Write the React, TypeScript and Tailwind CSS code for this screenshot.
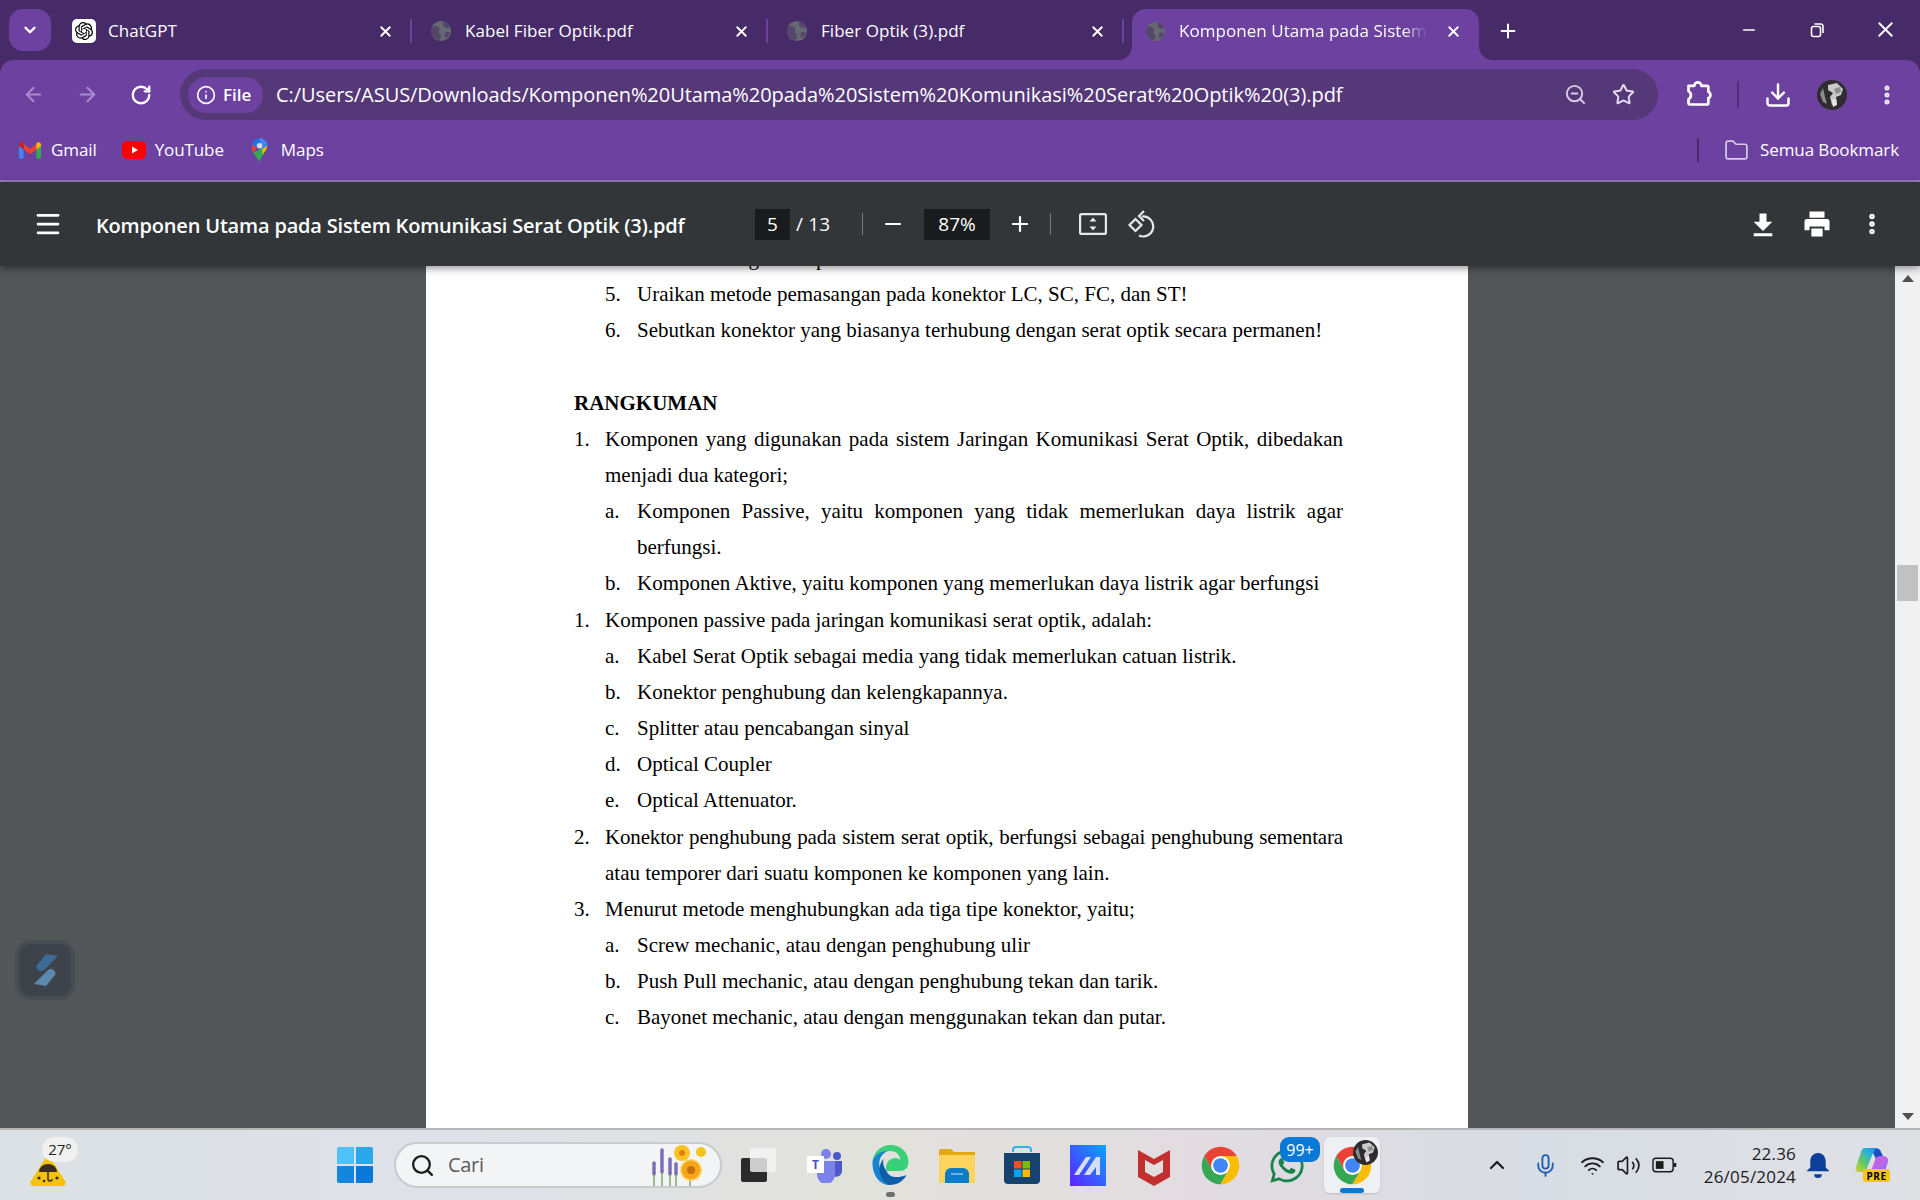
import React from "react";
import { ArrowLeft, ArrowRight, RotateCw, Info, Star, Download, EllipsisVertical, ChevronDown, ChevronUp, X, Plus, Minus, Menu, Folder, Search, ZoomOut, Mic, Wifi, Volume2 } from "lucide-react";
import { SiOpenai } from "react-icons/si";
import { FaWhatsapp } from "react-icons/fa";

const ui = "font-['Open_Sans','Liberation_Sans',sans-serif]";

function Globe({ className = "" }: { className?: string }) {
  return (
    <svg viewBox="0 0 24 24" className={className}>
      <circle cx="12" cy="12" r="11" fill="#666a70" />
      <path d="M4 6c3 1 5 1 6 3s-1 3 0 5 2 2 2 4-2 4-2 4C5 21 1 17 1 12c0-2 1-4 3-6zM14 2c3 0 6 2 8 6-2 1-4 1-6 0s-2-4-2-6zM17 13c2 0 4 0 5 1-1 3-3 5-5 6-1-2-2-6 0-7z" fill="#47296a" opacity=".55" />
    </svg>
  );
}

function ChromeLogo({ className = "" }: { className?: string }) {
  return (
    <svg viewBox="0 0 48 48" className={className}>
      <path d="M43 13A22 22 0 0 0 5 13L14.500 29.500 24 13Z" fill="#ea4335" />
      <path d="M5 13A22 22 0 0 0 24 46L33.500 29.500 14.500 29.500Z" fill="#34a853" />
      <path d="M24 46A22 22 0 0 0 43 13L24 13 33.500 29.500Z" fill="#fbbc04" />
      <circle cx="24" cy="24" r="11" fill="#fff" />
      <circle cx="24" cy="24" r="8.600" fill="#4285f4" />
    </svg>
  );
}

function Avatar({ className = "" }: { className?: string }) {
  return (
    <svg viewBox="0 0 30 30" className={className}>
      <circle cx="15" cy="15" r="15" fill="#2e2c2e" />
      <path d="M11 5l9-2 6 6-2 6-5 2 1 7-5 1-2-8 3-4-5-3z" fill="#c9c9c9" />
      <path d="M3 14l3-6 2 9 2 7-4-2zM17 9l6-2 1 5-5 2z" fill="#8d8d8d" />
      <path d="M15 20l4-1 1 6-4 2z" fill="#e6e6e6" />
    </svg>
  );
}

function Tab({ w, title, icon, pl, gap }: { w: string; title: string; icon: React.ReactNode; pl: string; gap: string }) {
  return (
    <div className={`flex h-[51px] shrink-0 items-center pb-[7px] ${w} ${pl}`}>
      {icon}
      <span className={`${gap} flex-1 text-[17px] tracking-[0.05px] text-white`}>{title}</span>
      <X size={17} strokeWidth={2.6} className="mr-[16px] text-white" />
      <div className="h-[24px] w-[2px] bg-[#6c41a0]" />
    </div>
  );
}

function GmailIcon() {
  return (
    <svg viewBox="0 0 24 18" className="h-[17px] w-[22px]">
      <path d="M0 3v13a2 2 0 0 0 2 2h3V8z" fill="#4285f4" />
      <path d="M24 3v13a2 2 0 0 1-2 2h-3V8z" fill="#34a853" />
      <path d="M5 8l7 5 7-5V2l-7 5-7-5z" fill="#ea4335" />
      <path d="M0 3c0-3 3-4 5-2v7L0 4z" fill="#c5221f" />
      <path d="M24 3c0-3-3-4-5-2v7l5-4z" fill="#fbbc04" />
    </svg>
  );
}

function MapsIcon() {
  return (
    <svg viewBox="0 0 18 26" className="h-[24px] w-[17px]">
      <path d="M9 0a8.500 8.500 0 0 1 8.500 8.500L9 13z" fill="#4285f4" />
      <path d="M2.500 3L9 0v6L5 10 1 7z" fill="#1a73e8" />
      <path d="M1 7l5 4-4 5C1 13 .5 10 1 7z" fill="#ea4335" />
      <path d="M2 16l15.500-7.500C17 14 12 18 9 26c-2-4-5-7-7-10z" fill="#34a853" />
      <path d="M12 12l5.500-3.500C17 12 14 16 12 18z" fill="#fbbc04" />
      <circle cx="9" cy="8.500" r="3" fill="#fff" opacity=".75" />
    </svg>
  );
}

type Row = { m?: string; t: string; l?: number; j?: boolean; b?: boolean; tight?: boolean };
const rows: Row[] = [
  { m: "4.", t: "Sebutkan fungsi dari pemutus konektor!", l: 1 },
  { m: "5.", t: "Uraikan metode pemasangan pada konektor LC, SC, FC, dan ST!", l: 1 },
  { m: "6.", t: "Sebutkan konektor yang biasanya terhubung dengan serat optik secara permanen!", l: 1 },
  { t: "" },
  { t: "RANGKUMAN", b: true },
  { m: "1.", t: "Komponen yang digunakan pada sistem Jaringan Komunikasi Serat Optik, dibedakan", j: true },
  { t: "menjadi dua kategori;", l: 2 },
  { m: "a.", t: "Komponen Passive, yaitu komponen yang tidak memerlukan daya listrik agar", l: 1, j: true },
  { t: "berfungsi.", l: 3 },
  { m: "b.", t: "Komponen Aktive, yaitu komponen yang memerlukan daya listrik agar berfungsi", l: 1 },
  { m: "1.", t: "Komponen passive pada jaringan komunikasi serat optik, adalah:" },
  { m: "a.", t: "Kabel Serat Optik sebagai media yang tidak memerlukan catuan listrik.", l: 1 },
  { m: "b.", t: "Konektor penghubung dan kelengkapannya.", l: 1 },
  { m: "c.", t: "Splitter atau pencabangan sinyal", l: 1 },
  { m: "d.", t: "Optical Coupler", l: 1 },
  { m: "e.", t: "Optical Attenuator.", l: 1 },
  { m: "2.", t: "Konektor penghubung pada sistem serat optik, berfungsi sebagai penghubung sementara", j: true, tight: true },
  { t: "atau temporer dari suatu komponen ke komponen yang lain.", l: 2 },
  { m: "3.", t: "Menurut metode menghubungkan ada tiga tipe konektor, yaitu;" },
  { m: "a.", t: "Screw mechanic, atau dengan penghubung ulir", l: 1 },
  { m: "b.", t: "Push Pull mechanic, atau dengan penghubung tekan dan tarik.", l: 1 },
  { m: "c.", t: "Bayonet mechanic, atau dengan menggunakan tekan dan putar.", l: 1 },
];

function DocRow({ r }: { r: Row }) {
  const indent = r.l === 1 || r.l === 2 ? "pl-[31px]" : r.l === 3 ? "pl-[63px]" : "";
  const mw = r.l === 1 ? "w-[32px]" : "w-[31px]";
  return (
    <div className={`flex h-[36.18px] items-center text-[21px] text-black ${indent}`}>
      {r.m && <span className={`${mw} shrink-0`}>{r.m}</span>}
      <span className={`flex-1 ${r.b ? "font-bold" : ""} ${r.j ? "text-justify [text-align-last:justify]" : ""} ${r.tight ? "whitespace-nowrap tracking-[-0.16px] [text-wrap:nowrap]" : ""}`}>{r.t}</span>
    </div>
  );
}

function Slot({ x, children }: { x: string; children: React.ReactNode }) {
  return <div className={`flex shrink-0 items-center justify-center ${x}`}>{children}</div>;
}

export default function App() {
  return (
    <div className={`flex h-[1200px] w-[1920px] flex-col overflow-hidden ${ui}`}>
      {/* tab strip */}
      <div className="bg-[#462b68]">
        <div className="flex h-[60px] items-end">
          <div className="mb-[9px] ml-[9px] flex h-[42px] w-[42px] items-center justify-center rounded-[14px] bg-[#6c41a0]">
            <ChevronDown size={18} strokeWidth={3.2} className="text-white" />
          </div>
          <Tab w="w-[361px]" pl="pl-[21px]" gap="ml-[12px]" title="ChatGPT" icon={<div className="flex h-[24px] w-[24px] items-center justify-center rounded-[5px] bg-white"><SiOpenai size={18} className="text-black" /></div>} />
          <Tab w="w-[356px]" pl="pl-[18px]" gap="ml-[13px]" title="Kabel Fiber Optik.pdf" icon={<Globe className="h-[22px] w-[22px]" />} />
          <Tab w="w-[356px]" pl="pl-[18px]" gap="ml-[13px]" title="Fiber Optik (3).pdf" icon={<Globe className="h-[22px] w-[22px]" />} />
          <div className="relative ml-[8px] flex h-[51px] w-[347px] items-center rounded-t-[14px] bg-[#6c41a0] pb-[7px] pl-[13px]">
            <svg viewBox="0 0 14 14" className="absolute bottom-0 left-[-14px] h-[14px] w-[14px]"><path d="M14 0v14H0C8 14 14 8 14 0z" fill="#6c41a0" /></svg>
            <svg viewBox="0 0 14 14" className="absolute bottom-0 right-[-14px] h-[14px] w-[14px]"><path d="M0 0v14h14C6 14 0 8 0 0z" fill="#6c41a0" /></svg>
            <Globe className="h-[21px] w-[21px]" />
            <span className="ml-[13px] w-[248px] overflow-hidden whitespace-nowrap text-[17px] tracking-[0.05px] text-white [mask-image:linear-gradient(to_right,#000_90%,transparent)]">Komponen Utama pada Sistem</span>
            <X size={17} strokeWidth={2.6} className="ml-[18px] text-white" />
          </div>
          <Plus size={22} strokeWidth={2.2} className="mb-[18px] ml-[18px] text-white" />
          <div className="flex-1" />
          <div className="mb-[18px] flex items-center">
            <Slot x="w-[68px]"><Minus size={18} strokeWidth={2.2} className="text-white" /></Slot>
            <Slot x="w-[68px]"><svg viewBox="0 0 16 16" className="h-[16px] w-[16px]" fill="none" stroke="#fff" strokeWidth="1.600"><rect x="2.500" y="4.500" width="9" height="10" rx="2" /><path d="M5.500 2h6a2.500 2.500 0 0 1 2.500 2.500V11" /></svg></Slot>
            <Slot x="w-[68px] mr-[1px]"><X size={25} strokeWidth={1.8} className="text-white" /></Slot>
          </div>
        </div>

        {/* address bar */}
        <div className="rounded-t-[14px] bg-[#6c41a0]">
          <div className="flex h-[60px] items-end">
            <Slot x="ml-[6px] w-[54px] h-[51px]"><ArrowLeft size={23} strokeWidth={2.1} className="text-[#a98ccb]" /></Slot>
            <Slot x="w-[54px] h-[51px]"><ArrowRight size={23} strokeWidth={2.1} className="text-[#a98ccb]" /></Slot>
            <Slot x="w-[54px] h-[51px]"><RotateCw size={22} strokeWidth={2.5} className="text-white" /></Slot>
            <div className="ml-[12px] flex h-[51px] w-[1478px] items-center rounded-full bg-[#553878]">
              <div className="ml-[8px] flex h-[36px] w-[75px] items-center rounded-full bg-[#6c41a0] pl-[8px]">
                <Info size={20} strokeWidth={2} className="text-white" />
                <span className="ml-[7px] text-[17px] font-semibold leading-none text-white">File</span>
              </div>
              <span className="ml-[13px] flex-1 whitespace-nowrap text-[20px] tracking-[-0.05px] text-white">C:/Users/ASUS/Downloads/Komponen%20Utama%20pada%20Sistem%20Komunikasi%20Serat%20Optik%20(3).pdf</span>
              <ZoomOut size={23} strokeWidth={2} className="mr-[25px] text-[#d9cde8]" />
              <Star size={23} strokeWidth={2.1} className="mr-[23px] text-[#e4daf0]" />
            </div>
            <svg viewBox="0 0 24 24" className="mb-[12px] ml-[27px] h-[28px] w-[28px]" fill="none" stroke="#fff" strokeWidth="2.300" strokeLinejoin="round"><path d="M3 5h5a3 3 0 0 1 6 0h5a1 1 0 0 1 1 1v4a3 3 0 0 1 0 5.500V20a1 1 0 0 1-1 1H4a1 1 0 0 1-1-1v-3.500a4 4 0 0 0 0-7z" /></svg>
            <div className="mb-[12px] ml-[24px] h-[27px] w-[2px] bg-[#4f2f78]" />
            <Download size={28} strokeWidth={2.1} className="mb-[11px] ml-[25px] text-white" />
            <Avatar className="mb-[10px] ml-[25px] h-[30px] w-[30px]" />
            <EllipsisVertical size={24} strokeWidth={3} className="mb-[13px] ml-[28px] text-[#f2edf8]" />
          </div>

          {/* bookmarks */}
          <div className="flex h-[60px] items-center text-[17px] tracking-[-0.1px] text-white">
            <div className="ml-[19px] flex items-center"><GmailIcon /><span className="ml-[10px]">Gmail</span></div>
            <div className="ml-[25px] flex items-center">
              <svg viewBox="0 0 24 24" className="h-[24px] w-[24px]"><rect x="0" y="3" width="24" height="18" rx="5" fill="#f00" /><path d="M10 8.500l6 3.500-6 3.500z" fill="#fff" /></svg>
              <span className="ml-[9px]">YouTube</span>
            </div>
            <div className="ml-[27px] flex items-center"><MapsIcon /><span className="ml-[13px]">Maps</span></div>
            <div className="flex-1" />
            <div className="h-[24px] w-[2px] bg-[#4a2b70]" />
            <Folder size={25} strokeWidth={1.6} className="ml-[25px] text-[#d8cde6]" />
            <span className="ml-[11px] mr-[21px]">Semua Bookmark</span>
          </div>
        </div>
      </div>
      <div className="h-[2px] bg-[#9a80bb]" />

      {/* pdf toolbar */}
      <div className="relative z-10 flex h-[84px] shrink-0 items-center bg-[#323639] text-white shadow-[0_2px_8px_rgba(0,0,0,0.45)]">
        <Menu size={30} strokeWidth={2.2} className="ml-[33px]" />
        <span className="ml-[33px] w-[659px] whitespace-nowrap pt-[3px] text-[20px] font-semibold tracking-[-0.18px]">Komponen Utama pada Sistem Komunikasi Serat Optik (3).pdf</span>
        <div className="flex h-[31px] w-[35px] items-center justify-center bg-[#191b1c] text-[19px]">5</div>
        <span className="ml-[6px] w-[66px] text-[19px] tracking-[0.2px]">/ 13</span>
        <div className="h-[22px] w-[1px] bg-[#75797c]" />
        <Minus size={24} strokeWidth={2.2} className="ml-[18px]" />
        <div className="ml-[19px] flex h-[31px] w-[66px] items-center justify-center bg-[#191b1c] text-[19px]">87%</div>
        <Plus size={24} strokeWidth={2.2} className="ml-[18px]" />
        <div className="ml-[18px] h-[22px] w-[1px] bg-[#75797c]" />
        <svg viewBox="0 0 28 22" className="ml-[28px] h-[22px] w-[28px]" fill="none" stroke="#e8e8e8" strokeWidth="2.200"><rect x="1.100" y="1.100" width="25.800" height="19.800" rx="1.500" /><path d="M14 4.500l-3.500 4h7zM14 17.500l-3.500-4h7z" fill="#e8e8e8" stroke="none" /></svg>
        <svg viewBox="0 0 28 28" className="ml-[20px] h-[28px] w-[28px]" fill="none" stroke="#e8e8e8" strokeWidth="2.200"><path d="M15 6.500a10 10 0 1 1-3 19" /><path d="M17 1l-5 5 5 5" /><path d="M8.500 9l6 6-6 6-6-6z" /></svg>
        <div className="flex-1" />
        <svg viewBox="0 0 24 24" className="h-[28px] w-[28px]" fill="#fff"><path d="M9 3h6v7h5l-8 8-8-8h5zM4 20h16v2.500H4z" /></svg>
        <svg viewBox="0 0 24 24" className="ml-[25px] h-[30px] w-[30px]" fill="#fff"><path d="M6 2h12v5H6zM4 8h16a2 2 0 0 1 2 2v7h-4v-3H6v3H2v-7a2 2 0 0 1 2-2zM7.500 15.500h9V22h-9z" /></svg>
        <EllipsisVertical size={26} strokeWidth={3} className="ml-[27px] mr-[35px]" />
      </div>

      {/* viewer */}
      <div className="relative flex min-h-0 flex-1 bg-[#525659]">
        <div className="flex-1 overflow-hidden pl-[426px]">
          <div className="h-full w-[1042px] overflow-hidden bg-white pl-[148px] pr-[125px] font-['Liberation_Serif',serif]">
            <div className="-mt-[25.5px]">
              {rows.map((r, i) => (
                <DocRow key={i} r={r} />
              ))}
            </div>
          </div>
        </div>
        <div className="flex w-[25px] shrink-0 flex-col items-center bg-[#f1f1f1]">
          <svg viewBox="0 0 12 7" className="mt-[9px] h-[7px] w-[12px]"><path d="M6 0l6 7H0z" fill="#505050" /></svg>
          <div className="mt-[283px] h-[36px] w-[21px] bg-[#c1c1c1]" />
          <div className="flex-1" />
          <svg viewBox="0 0 12 7" className="mb-[8px] h-[7px] w-[12px]"><path d="M6 7l6-7H0z" fill="#505050" /></svg>
        </div>
        <div className="absolute left-[15px] top-[674px] flex h-[60px] w-[60px] items-center justify-center rounded-[16px] border-[4px] border-[#484c53] bg-[#3e424b]">
          <svg viewBox="0 0 26 34" className="h-[34px] w-[26px]">
            <path d="M14 1l12 2L12 17c-3 3-9-1-7-5z" fill="#3d6b96" />
            <path d="M14 33L2 31l14-14c3-3 9 1 7 5z" fill="#5b88ac" />
          </svg>
        </div>
      </div>

      {/* taskbar */}
      <div className="relative flex h-[72px] shrink-0 items-center border-t-[2px] border-[#b4b5b6] bg-[linear-gradient(90deg,#dbe1e4_0%,#dfe1e8_25%,#e2e2dc_45%,#e2dce0_62%,#d8dce4_80%,#dee0e4_100%)]">
        <div className="relative ml-[30px] h-[60px] w-[48px]">
          <svg viewBox="0 0 36 30" className="absolute left-0 top-[21px] h-[30px] w-[36px]">
            <path d="M15.500 2a3 3 0 0 1 5 0L35 25a3 3 0 0 1-2.500 5H3.500A3 3 0 0 1 1 25z" fill="#f4c20d" />
            <path d="M9 16a9 8 0 0 1 18 0z" fill="#3a2c20" />
            <path d="M18 15v8a2 2 0 0 0 4 0" fill="none" stroke="#3a2c20" strokeWidth="1.500" />
            <circle cx="9" cy="22" r="1.600" fill="#3a2c20" /><circle cx="27" cy="22" r="1.600" fill="#3a2c20" /><circle cx="14" cy="25" r="1.300" fill="#3a2c20" />
          </svg>
          <div className="absolute left-[12px] top-[2px] flex h-[25px] w-[36px] items-center justify-center rounded-full bg-[#f1f1f1] text-[15px] text-[#222]">27°</div>
        </div>
        <div className="ml-[259px] grid h-[36px] w-[36px] grid-cols-2 gap-[1.5px]">
          <div className="rounded-tl-[2px] bg-[#4fc3f7]" />
          <div className="rounded-tr-[2px] bg-[#29a8ec]" />
          <div className="rounded-bl-[2px] bg-[#1487dd]" />
          <div className="rounded-br-[2px] bg-[#0a78d6]" />
        </div>
        <div className="ml-[21px] flex h-[46px] w-[328px] items-center rounded-full border-[2px] border-[#c8cacd] bg-[#f3f4f6]">
          <Search size={25} strokeWidth={2.2} className="ml-[14px] text-[#1c1c1c]" />
          <span className="ml-[13px] flex-1 text-[20px] tracking-[-0.3px] text-[#5c5c5c]">Cari</span>
          <svg viewBox="0 0 60 42" className="mr-[12px] h-[42px] w-[60px]">
            <g stroke="#7e6bb8" strokeWidth="3.500" strokeLinecap="round" strokeDasharray="3 1"><path d="M6 30V18M14 28V6M22 30V14M28 30V20" /></g>
            <g stroke="#6f9c58" strokeWidth="1.300"><path d="M6 42V30M14 42V28M22 42V30M28 42V30M42 42V26" /></g>
            <circle cx="34" cy="9" r="8" fill="#f8c323" /><circle cx="34" cy="9" r="3" fill="#d9820f" />
            <circle cx="53" cy="8" r="5" fill="#f2c41f" />
            <circle cx="43" cy="26" r="10" fill="#f5a51a" strokeDasharray="2 1" stroke="#fbd04a" strokeWidth="2" /><circle cx="43" cy="26" r="4" fill="#c4700f" />
          </svg>
        </div>
        <div className="relative ml-[19px] h-[34px] w-[35px]">
          <div className="absolute bottom-0 left-0 h-[24px] w-[26px] rounded-[2px] bg-[#2b2b2b]" />
          <div className="absolute right-0 top-0 h-[24px] w-[26px] rounded-[2px] bg-[#f5f5f5]/80" />
        </div>
        <svg viewBox="0 0 36 36" className="ml-[31px] h-[36px] w-[36px]">
          <circle cx="19" cy="7" r="5" fill="#7b83eb" /><circle cx="30" cy="9" r="4" fill="#5059c9" />
          <path d="M24 14h11v10a6 6 0 0 1-11 3z" fill="#5059c9" /><path d="M10 14h18v14a9 9 0 0 1-18 0z" fill="#7b83eb" />
          <rect x="0" y="9" width="17" height="17" fill="#fff" />
          <text x="8.500" y="22" textAnchor="middle" fontSize="12" fontWeight="700" fill="#4b53bc">T</text>
        </svg>
        <div className="relative ml-[29px] h-[40px] w-[37px]">
          <svg viewBox="0 0 36 40" className="h-[40px] w-[37px]">
            <path d="M18 0c10 0 18 7 18 17 0 6-4 9-9 9H14c-2-8 3-13 9-13 2 0 4 1 5 2-1-6-5-9-10-9C8 6 1 12 0 18 0 8 8 0 18 0z" fill="#3ad07a" />
            <path d="M0 18c0-6 7-12 15-12-6 3-9 8-8 15 1 8 6 14 12 16-1 0-1 3-2 3C7 40 0 30 0 18z" fill="#1583d0" />
            <path d="M14 26c2 6 10 8 20 4-3 6-9 10-17 10-5-2-10-8-10-16 0-4 2-8 4-10-1 4 0 8 3 12z" fill="#0d5ea9" />
          </svg>
          <div className="absolute bottom-[-12px] left-[14px] h-[5px] w-[9px] rounded-full bg-[#6f6f6f]" />
        </div>
        <svg viewBox="0 0 36 36" className="ml-[30px] h-[36px] w-[36px]">
          <path d="M0 4a2 2 0 0 1 2-2h10l3 3h21v28H0z" fill="#e4a70f" />
          <path d="M0 8h36v28H0z" fill="#fcd35c" />
          <path d="M6 36v-9a6 6 0 0 1 6-6h12a6 6 0 0 1 6 6v9z" fill="#0c7cc8" />
          <rect x="12" y="26" width="12" height="2" fill="#ffffff" opacity=".4" />
        </svg>
        <svg viewBox="0 0 36 38" className="ml-[29px] h-[38px] w-[36px]">
          <path d="M9 6V4a3 3 0 0 1 3-3h12a3 3 0 0 1 3 3v2" fill="none" stroke="#2fb4e6" strokeWidth="2" />
          <path d="M0 7h36v27a4 4 0 0 1-4 4H4a4 4 0 0 1-4-4z" fill="#16426e" />
          <rect x="10" y="15" width="7.500" height="7.500" fill="#f25022" /><rect x="18.500" y="15" width="7.500" height="7.500" fill="#7fba00" />
          <rect x="10" y="23.500" width="7.500" height="7.500" fill="#00a4ef" /><rect x="18.500" y="23.500" width="7.500" height="7.500" fill="#ffb900" />
        </svg>
        <svg viewBox="0 0 36 41" className="ml-[30px] h-[41px] w-[36px]">
          <defs><linearGradient id="ma" x1="1" y1="0" x2="0" y2="1"><stop offset="0" stopColor="#0aa5ff" /><stop offset="1" stopColor="#6020ff" /></linearGradient></defs>
          <rect width="36" height="41" fill="url(#ma)" />
          <path d="M4 30L16 12h5L9 30zM14 30l12-18h4v18h-4v-8l-6 8z" fill="#d7dcf8" />
        </svg>
        <svg viewBox="0 0 32 41" className="ml-[32px] h-[41px] w-[32px]">
          <path d="M0 5l16 9 16-9v27l-16 9-16-9z" fill="#c22f2f" />
          <path d="M7 15l9 5 9-5v12l-9 5-9-5z" fill="#e1dede" />
        </svg>
        <ChromeLogo className="ml-[30px] h-[41px] w-[41px]" />
        <div className="relative ml-[27px] h-[36px] w-[36px]">
          <FaWhatsapp size={38} className="text-[#17854b]" />
          <div className="absolute left-[12px] top-[-10px] flex h-[25px] w-[40px] items-center justify-center rounded-[9px] bg-[#0a78d6] text-[16px] text-white">99+</div>
        </div>
        <div className="relative ml-[20px] flex h-[56px] w-[56px] items-center justify-center rounded-[6px] bg-[#eff0f3] shadow-[0_1px_2px_rgba(0,0,0,0.15)]">
          <ChromeLogo className="h-[41px] w-[41px]" />
          <Avatar className="absolute right-[2px] top-[3px] h-[25px] w-[25px]" />
          <div className="absolute bottom-0 left-[16px] h-[5px] w-[24px] rounded-full bg-[#0a78d6]" />
        </div>
        <div className="flex-1" />
        <ChevronUp size={24} strokeWidth={2.2} className="mr-[24px] text-[#1c1c1c]" />
        <Mic size={25} strokeWidth={1.8} className="mr-[22px] text-[#1c5fb3]" />
        <Wifi size={25} strokeWidth={1.8} className="mr-[11px] text-[#1c1c1c]" />
        <Volume2 size={25} strokeWidth={1.6} className="mr-[11px] text-[#1c1c1c]" />
        <svg viewBox="0 0 26 16" className="mr-[27px] h-[16px] w-[25px]" fill="none" stroke="#1c1c1c" strokeWidth="1.500"><rect x="1" y="1" width="21" height="14" rx="3" /><rect x="4" y="4" width="8" height="8" fill="#1c1c1c" stroke="none" /><path d="M24 6v4" strokeWidth="2.500" /></svg>
        <div className="flex flex-col items-end text-[17px] leading-[23px] tracking-[0.2px] text-[#1c1c1c]">
          <span>22.36</span>
          <span>26/05/2024</span>
        </div>
        <svg viewBox="0 0 24 26" className="ml-[10px] h-[25px] w-[24px]" fill="#0c3f99"><path d="M12 0c5 0 8 4 8 9v6l4 4H0l4-4V9c0-5 3-9 8-9zM8 22h8a4 4 0 0 1-8 0z" /></svg>
        <div className="relative ml-[25px] mr-[30px] h-[34px] w-[35px]">
          <svg viewBox="0 0 34 26" className="h-[26px] w-[34px]">
            <defs>
              <linearGradient id="cp1" x1="0" y1="1" x2="1" y2="0"><stop offset="0" stopColor="#e5c93a" /><stop offset=".3" stopColor="#6fce55" /><stop offset=".7" stopColor="#22aee0" /><stop offset="1" stopColor="#2f78e6" /></linearGradient>
              <linearGradient id="cp2" x1="0" y1="0" x2="1" y2="1"><stop offset="0" stopColor="#d75fd8" /><stop offset=".6" stopColor="#b767e8" /><stop offset="1" stopColor="#7a6cf0" /></linearGradient>
            </defs>
            <path d="M20 0c3 0 5 1 6 4l3 6-8 1-3-6z" fill="#1b4fc4" />
            <path d="M27 8c4 0 7 2 6 6l-2 6c-1 3-4 5-8 5H11c3 0 5-2 6-5l3-8c1-3 3-4 7-4z" fill="url(#cp2)" />
            <path d="M10 0h14c-3 0-5 2-6 5l-6 15c-1 3-3 4-5 4H4c-3 0-4-2-3-5L6 4C7 1 8 0 10 0z" fill="url(#cp1)" />
          </svg>
          <div className="absolute bottom-0 right-0 flex h-[13px] w-[27px] items-center justify-center rounded-[3px] bg-[#f5c518] text-[10px] font-bold leading-none tracking-[0.5px] text-black">PRE</div>
        </div>
      </div>
    </div>
  );
}
